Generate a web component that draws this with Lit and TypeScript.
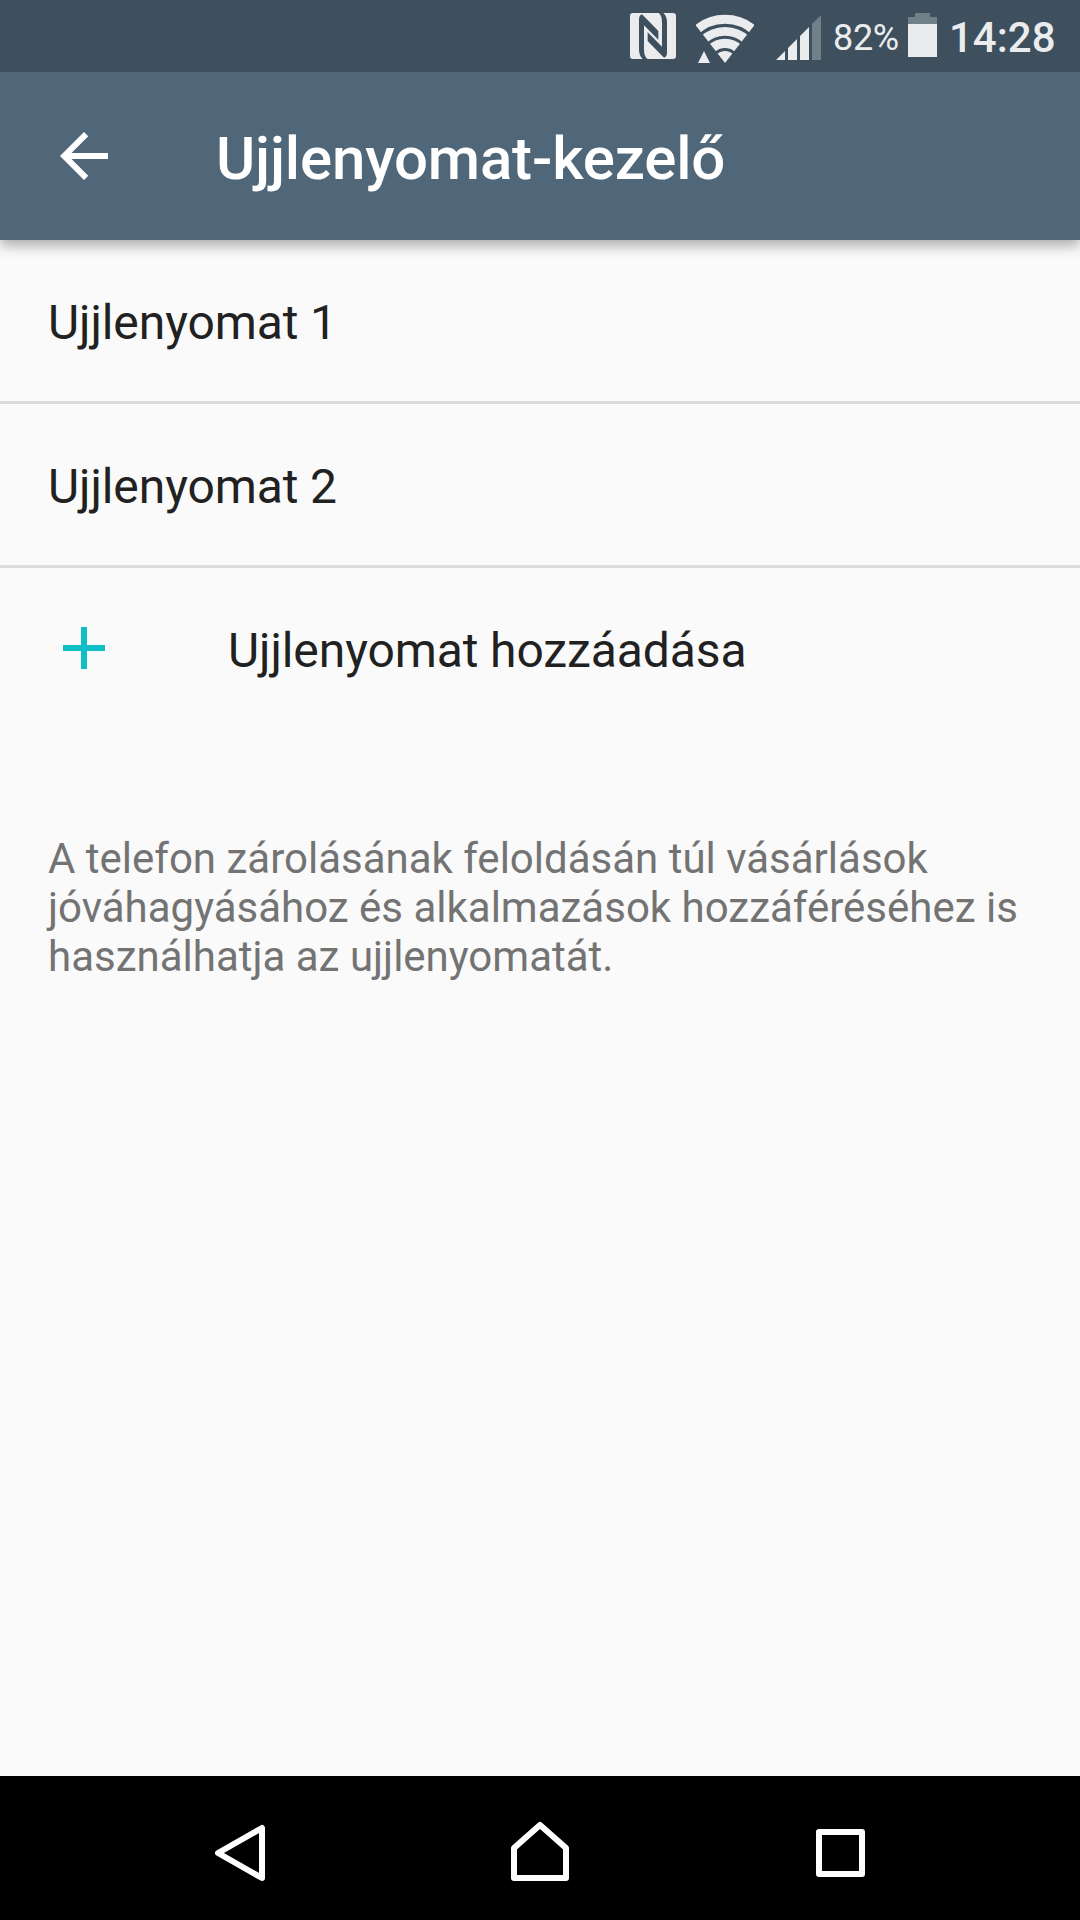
import { LitElement, html, css, svg } from "lit";
import { customElement, property } from "lit/decorators.js";

@customElement("status-bar")
class StatusBar extends LitElement {
  static styles = css`
    :host {
      display: flex;
      align-items: flex-start;
      justify-content: flex-end;
      box-sizing: border-box;
      height: 72px;
      padding-right: 26px;
      background: #3e4f5e;
      color: #ebecee;
      z-index: 2;
    }
    svg { display: block; flex: none; }
    .nfc { margin: 13px 20px 0 0; }
    .wifi { margin: 14px 22px 0 0; }
    .signal { margin: 15px 12px 0 0; }
    .battery { margin: 13px 12px 0 0; }
    .percent { width: 67px; margin-right: 8px; font-size: 36px; line-height: 76px; letter-spacing: -0.3px; white-space: nowrap; }
    .clock { width: 105px; font-size: 42px; font-weight: 500; line-height: 76px; white-space: nowrap; }
  `;
  render() {
    return html`
      <svg class="nfc" width="46" height="46" viewBox="30 39 138 138">
        <rect x="30" y="39" width="138" height="138" rx="9" fill="#ebecee" />
        <g fill="#3e4f5e">
          <path d="M57 58Q57 46 66 43L115 93V119L72 76V148Q72 170 82 177H68Q57 168 57 148Z" />
          <path d="M141 158Q141 170 132 173L83 123V97L126 140V68Q126 46 116 39H130Q141 48 141 68Z" />
        </g>
      </svg>
      <svg class="wifi" width="58" height="49" viewBox="228 42 174 147">
        <defs>
          <clipPath id="fan"><path d="M315 189L220 67V30H410V67Z" /></clipPath>
        </defs>
        <g clip-path="url(#fan)">
          <circle cx="315" cy="189" r="36" fill="#ebecee" />
          <g fill="none" stroke="#ebecee">
            <circle cx="315" cy="189" r="59" stroke-width="28" />
            <circle cx="315" cy="189" r="95" stroke-width="26" />
            <circle cx="315" cy="189" r="131" stroke-width="27" />
          </g>
        </g>
        <path fill="#ebecee" d="M252 153L270 189H234Z" />
      </svg>
      <svg class="signal" width="45" height="45" viewBox="468 45 135 135">
        <path fill="#ebecee" d="M468 180L495 153V180ZM504 144L531 117V180H504ZM540 108L567 81V180H540Z" />
        <path fill="#72808a" d="M576 72L603 45V180H576Z" />
      </svg>
      <span class="percent">82%</span>
      <svg class="battery" width="29" height="44" viewBox="0 0 29 44">
        <path fill="#72808a" d="M7 0H22V4H29V12H0V4H7Z" />
        <path fill="#ebecee" d="M0 11H29V44H0Z" />
      </svg>
      <span class="clock">14:28</span>
    `;
  }
}

@customElement("app-header")
class AppHeader extends LitElement {
  @property() heading = "";
  static styles = css`
    :host {
      display: flex;
      align-items: center;
      gap: 96px;
      box-sizing: border-box;
      height: 168px;
      padding-left: 48px;
      background: #506679;
      color: #fff;
      box-shadow: 0 6px 12px rgba(0, 0, 0, 0.3);
      z-index: 1;
    }
    svg { display: block; }
    .heading { margin: 0; padding-top: 5px; font-size: 60px; font-weight: 500; line-height: 72px; letter-spacing: -0.17px; white-space: nowrap; }
  `;
  render() {
    return html`
      <svg width="72" height="72" viewBox="0 0 24 24">
        <path fill="#fff" d="M20 11H7.830L13.420 5.410L12 4L4 12L12 20L13.410 18.590L7.830 13H20Z" />
      </svg>
      <h1 class="heading">${this.heading}</h1>
    `;
  }
}

@customElement("nav-bar")
class NavBar extends LitElement {
  static styles = css`
    :host {
      display: flex;
      align-items: center;
      justify-content: space-between;
      box-sizing: border-box;
      height: 144px;
      padding: 6px 204px 0;
      background: #000;
    }
    svg { display: block; }
  `;
  private icon(shape: unknown) {
    return html`<svg width="72" height="72" viewBox="0 0 72 72" fill="none" stroke="#fff" stroke-width="6" stroke-linejoin="round">${shape}</svg>`;
  }
  render() {
    return html`
      ${this.icon(svg`<path d="M14 38L58 13V63Z" />`)}
      ${this.icon(svg`<path d="M10 33L36 10L62 33V63H10Z" />`)}
      ${this.icon(svg`<path d="M15 17H58V59H15Z" />`)}
    `;
  }
}

@customElement("app-root")
class AppRoot extends LitElement {
  private fingerprints = ["Ujjlenyomat 1", "Ujjlenyomat 2"];
  static styles = css`
    :host {
      display: flex;
      flex-direction: column;
      height: 1920px;
      background: #fafafa;
      font-family: Roboto, "Noto Sans", sans-serif;
      color: #212121;
    }
    .content { flex: 1; }
    .row {
      display: flex;
      align-items: center;
      box-sizing: border-box;
      height: 164px;
      padding-left: 48px;
      border-bottom: 3px solid #dcdcdc;
      font-size: 48px;
      line-height: 56px;
      letter-spacing: -0.1px;
    }
    .label { padding-top: 4px; }
    .add { gap: 108px; height: 160px; border-bottom: none; }
    .add .label { padding-top: 5px; }
    .plus { display: block; }
    .note {
      margin: 0;
      padding: 106px 48px 0;
      font-size: 42px;
      line-height: 49px;
      color: #737373;
    }
  `;
  render() {
    return html`
      <status-bar></status-bar>
      <app-header heading="Ujjlenyomat-kezelő"></app-header>
      <main class="content">
        ${this.fingerprints.map((name) => html`<div class="row"><span class="label">${name}</span></div>`)}
        <div class="row add">
          <svg class="plus" width="72" height="72" viewBox="0 0 24 24">
            <path fill="#0fbfc5" d="M19 13H13V19H11V13H5V11H11V5H13V11H19Z" />
          </svg>
          <span class="label">Ujjlenyomat hozzáadása</span>
        </div>
        <p class="note">
          A telefon zárolásának feloldásán túl vásárlások jóváhagyásához és alkalmazások hozzáféréséhez is
          használhatja az ujjlenyomatát.
        </p>
      </main>
      <nav-bar></nav-bar>
    `;
  }
}
